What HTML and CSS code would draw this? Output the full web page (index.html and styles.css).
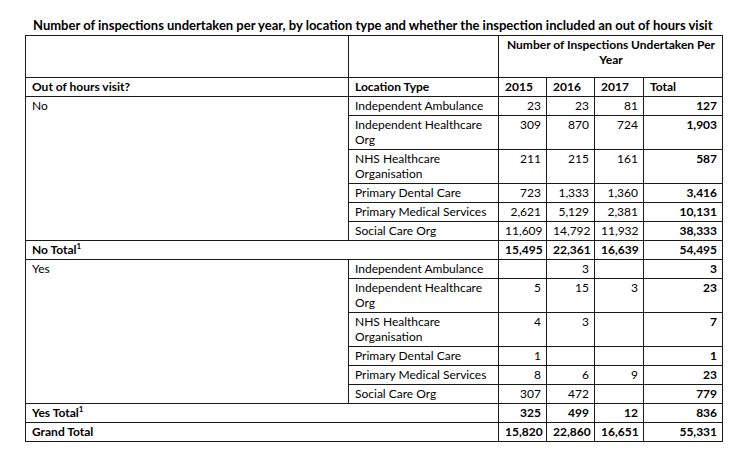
FILE: index.html
```html
<!DOCTYPE html>
<html lang="en">
<head>
<meta charset="utf-8">
<title>Inspections by location type</title>
<link rel="stylesheet" href="styles.css">
</head>
<body>
<div class="page">
  <h1 class="title">Number of inspections undertaken per year, by location type and whether the inspection included an out of hours visit</h1>
  <table class="data">
    <colgroup>
      <col class="c-visit">
      <col class="c-type">
      <col class="c-y15">
      <col class="c-y16">
      <col class="c-y17">
      <col class="c-total">
    </colgroup>
    <thead>
      <tr class="head-top">
        <th></th>
        <th></th>
        <th colspan="4" class="center">Number of Inspections Undertaken Per<br>Year</th>
      </tr>
      <tr class="head-cols">
        <th>Out of hours visit?</th>
        <th>Location Type</th>
        <th>2015</th>
        <th>2016</th>
        <th>2017</th>
        <th>Total</th>
      </tr>
    </thead>
    <tbody>
      <tr>
        <td rowspan="6" class="group">No</td>
        <td>Independent Ambulance</td>
        <td class="num">23</td><td class="num">23</td><td class="num">81</td><td class="num b">127</td>
      </tr>
      <tr>
        <td>Independent Healthcare<br>Org</td>
        <td class="num">309</td><td class="num">870</td><td class="num">724</td><td class="num b">1,903</td>
      </tr>
      <tr>
        <td>NHS Healthcare<br>Organisation</td>
        <td class="num">211</td><td class="num">215</td><td class="num">161</td><td class="num b">587</td>
      </tr>
      <tr>
        <td>Primary Dental Care</td>
        <td class="num">723</td><td class="num">1,333</td><td class="num">1,360</td><td class="num b">3,416</td>
      </tr>
      <tr>
        <td>Primary Medical Services</td>
        <td class="num">2,621</td><td class="num">5,129</td><td class="num">2,381</td><td class="num b">10,131</td>
      </tr>
      <tr>
        <td>Social Care Org</td>
        <td class="num">11,609</td><td class="num">14,792</td><td class="num">11,932</td><td class="num b">38,333</td>
      </tr>
      <tr class="total">
        <td colspan="2">No Total<sup>1</sup></td>
        <td class="num">15,495</td><td class="num">22,361</td><td class="num">16,639</td><td class="num">54,495</td>
      </tr>
      <tr>
        <td rowspan="6" class="group">Yes</td>
        <td>Independent Ambulance</td>
        <td class="num"></td><td class="num">3</td><td class="num"></td><td class="num b">3</td>
      </tr>
      <tr>
        <td>Independent Healthcare<br>Org</td>
        <td class="num">5</td><td class="num">15</td><td class="num">3</td><td class="num b">23</td>
      </tr>
      <tr>
        <td>NHS Healthcare<br>Organisation</td>
        <td class="num">4</td><td class="num">3</td><td class="num"></td><td class="num b">7</td>
      </tr>
      <tr>
        <td>Primary Dental Care</td>
        <td class="num">1</td><td class="num"></td><td class="num"></td><td class="num b">1</td>
      </tr>
      <tr>
        <td>Primary Medical Services</td>
        <td class="num">8</td><td class="num">6</td><td class="num">9</td><td class="num b">23</td>
      </tr>
      <tr>
        <td>Social Care Org</td>
        <td class="num">307</td><td class="num">472</td><td class="num"></td><td class="num b">779</td>
      </tr>
      <tr class="total">
        <td colspan="2">Yes Total<sup>1</sup></td>
        <td class="num">325</td><td class="num">499</td><td class="num">12</td><td class="num">836</td>
      </tr>
      <tr class="total">
        <td colspan="2">Grand Total</td>
        <td class="num">15,820</td><td class="num">22,860</td><td class="num">16,651</td><td class="num">55,331</td>
      </tr>
    </tbody>
  </table>
</div>
</body>
</html>
```

FILE: styles.css
```css
html, body {
  margin: 0;
  padding: 0;
  background: #ffffff;
}

body {
  font-family: "Lato", "Liberation Sans", sans-serif;
  color: #000000;
}

.page {
  padding: 17px 0 0 25px;
}

.title {
  margin: 0 0 2px 0;
  padding-left: 8px;
  font-size: 13px;
  line-height: 16px;
  font-weight: bold;
  white-space: nowrap;
}

.data {
  border-collapse: collapse;
  table-layout: fixed;
  width: 697px;
  font-size: 12px;
  line-height: 15px;
}

.c-visit { width: 323px; }
.c-type { width: 150px; }
.c-y15 { width: 48px; }
.c-y16 { width: 48px; }
.c-y17 { width: 49px; }
.c-total { width: 79px; }

.data th,
.data td {
  border: 1px solid #1a1a1a;
  padding: 1px 5px 2px 6px;
  vertical-align: top;
  text-align: left;
  overflow: hidden;
  white-space: nowrap;
}

.data th {
  font-weight: bold;
}

.head-top th {
  height: 38px;
}

.data th.center {
  text-align: center;
}

.data td.num {
  text-align: right;
}

.data td.b {
  font-weight: bold;
}

.total td {
  font-weight: bold;
}

sup {
  font-size: 8px;
  line-height: 0;
  vertical-align: 5px;
}
```
